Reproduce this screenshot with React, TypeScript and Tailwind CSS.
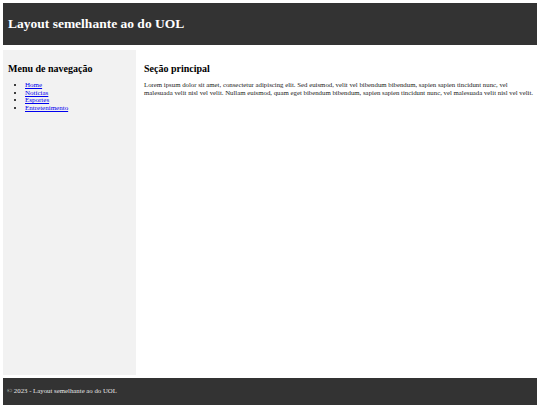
import React from 'react';

const links = ['Home', 'Notícias', 'Esportes', 'Entretenimento'];

const App: React.FC = () => {
    return (
        <div className="w-[540px] h-[405px] overflow-hidden bg-white px-[3px] pt-[3px] flex flex-col font-[family-name:'Liberation_Serif',serif] text-black">
            <header className="h-[42px] bg-[#333333] text-white flex items-center px-[5px] shrink-0">
                <h1 className="text-[13.5px] font-bold leading-none">Layout semelhante ao do UOL</h1>
            </header>

            <div className="flex flex-1 mt-[5px] min-h-0">
                <nav className="w-[133px] bg-[#f2f2f2] px-[5px] pt-[14px] shrink-0">
                    <h2 className="text-[10px] font-bold leading-none">Menu de navegação</h2>
                    <ul className="list-disc pl-[17px] mt-[8px] text-[7px] leading-[7.5px]">
                        {links.map(link => (
                            <li key={link}>
                                <a href="#" className="text-[#0000ee] underline">{link}</a>
                            </li>
                        ))}
                    </ul>
                </nav>

                <main className="flex-1 pl-[8px] pr-[3px] pt-[14px]">
                    <h2 className="text-[10px] font-bold leading-none">Seção principal</h2>
                    <p className="mt-[7px] text-[6.8px] leading-[7.5px] text-[#222]">
                        Lorem ipsum dolor sit amet, consectetur adipiscing elit. Sed euismod, velit vel bibendum bibendum, sapien sapien tincidunt nunc, vel malesuada velit nisl vel velit. Nullam euismod, quam eget bibendum bibendum, sapien sapien tincidunt nunc, vel malesuada velit nisl vel velit.
                    </p>
                </main>
            </div>

            <footer className="h-[27px] mt-[3px] bg-[#333333] text-[#e6e6e6] flex items-center px-[4px] shrink-0">
                <p className="text-[6.8px] leading-none">© 2023 - Layout semelhante ao do UOL</p>
            </footer>
        </div>
    );
};

export default App;
